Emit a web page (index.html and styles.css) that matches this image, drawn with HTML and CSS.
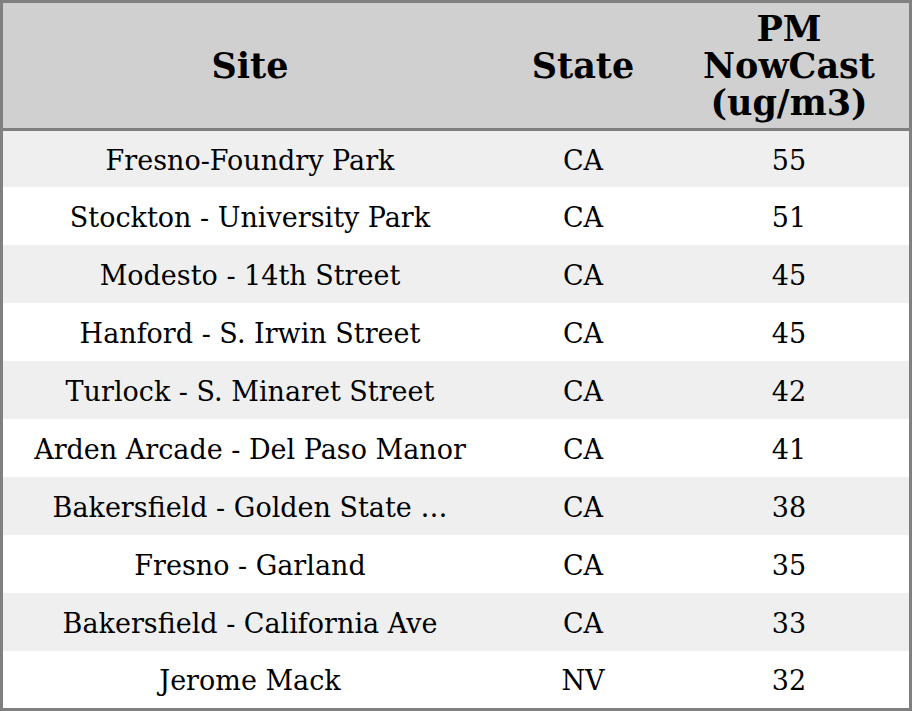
FILE: index.html
```html
<!DOCTYPE html>
<html>
<head>
<meta charset="utf-8">
<link rel="stylesheet" href="styles.css">
</head>
<body>
<table class="aq">
  <colgroup>
    <col class="c-site">
    <col class="c-state">
    <col class="c-pm">
  </colgroup>
  <thead>
    <tr class="head">
      <th>Site</th>
      <th>State</th>
      <th class="pm">PM<br>NowCast<br>(ug/m3)</th>
    </tr>
  </thead>
  <tbody>
    <tr class="odd first"><td>Fresno-Foundry Park</td><td>CA</td><td>55</td></tr>
    <tr class="even"><td>Stockton - University Park</td><td>CA</td><td>51</td></tr>
    <tr class="odd"><td>Modesto - 14th Street</td><td>CA</td><td>45</td></tr>
    <tr class="even"><td>Hanford - S. Irwin Street</td><td>CA</td><td>45</td></tr>
    <tr class="odd"><td>Turlock - S. Minaret Street</td><td>CA</td><td>42</td></tr>
    <tr class="even"><td>Arden Arcade - Del Paso Manor</td><td>CA</td><td>41</td></tr>
    <tr class="odd"><td>Bakersfield - Golden State …</td><td>CA</td><td>38</td></tr>
    <tr class="even"><td>Fresno - Garland</td><td>CA</td><td>35</td></tr>
    <tr class="odd"><td>Bakersfield - California Ave</td><td>CA</td><td>33</td></tr>
    <tr class="even last"><td>Jerome Mack</td><td>NV</td><td>32</td></tr>
  </tbody>
</table>
</body>
</html>
```
FILE: styles.css
```css
html, body {
  margin: 0;
  padding: 0;
  background: #ffffff;
}
.aq {
  width: 912px;
  border-collapse: separate;
  border-spacing: 0;
  border: 3px solid #808080;
  table-layout: fixed;
  font-family: "DejaVu Serif", serif;
  color: #000;
}
.c-site { width: 494px; }
.c-state { width: 172px; }
.c-pm { width: 240px; }
.head th {
  background: #d0d0d0;
  height: 125px;
  padding: 0;
  font-size: 35px;
  font-weight: bold;
  line-height: 37px;
  text-align: center;
  vertical-align: middle;
  border-bottom: 3px solid #808080;
}
td {
  padding: 3px 0 0 0;
  height: 55px;
  font-size: 27px;
  line-height: 32px;
  text-align: center;
  vertical-align: middle;
}
tr.first td { height: 53px; }
tr.last td { height: 54px; }
tr.odd td { background: #efefef; }
tr.even td { background: #ffffff; }
```
